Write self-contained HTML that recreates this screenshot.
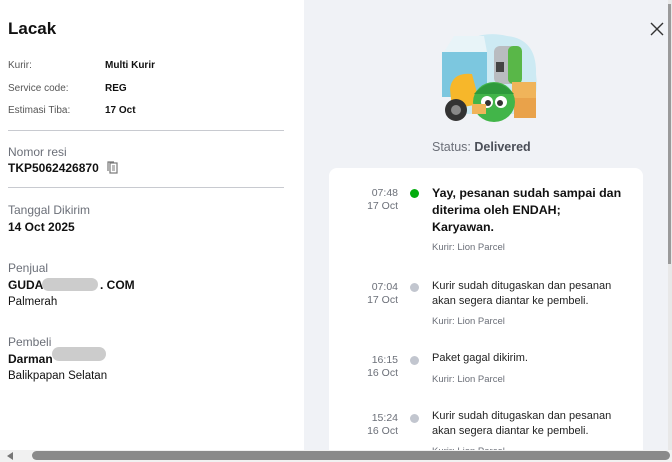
<!DOCTYPE html>
<html><head><meta charset="utf-8"><style>
*{margin:0;padding:0;box-sizing:border-box}
body{width:672px;height:462px;overflow:hidden;background:#fff;font-family:"Liberation Sans",sans-serif;color:#111;position:relative}
.abs{position:absolute;white-space:nowrap}
.lbl{font-size:10px;color:#555}
.val{font-size:10px;font-weight:bold}
.g{font-size:12px;color:#6b6f78}
.b{font-size:12px;font-weight:bold}
.n{font-size:11.5px}
hr{position:absolute;left:8px;width:276px;border:0;border-top:1px solid #c8cad0}
#right{position:absolute;left:304px;top:0;width:366px;height:450px;background:#f0f2f6}
#card{position:absolute;left:329px;top:168px;width:314px;height:282px;background:#fff;border-radius:8px 8px 0 0}
.t{font-size:10.5px;color:#6b6f78;text-align:right;width:48px;line-height:13px}
.dot{position:absolute;width:9px;height:9px;border-radius:50%;background:#c2c6cf}
.m{font-size:11px;line-height:15px;color:#222}
.k{font-size:9.5px;color:#6b6f78}
</style></head><body>
<div class="abs" style="left:8px;top:19px;font-size:17px;font-weight:bold">Lacak</div>
<div class="abs lbl" style="left:8px;top:60px">Kurir:</div><div class="abs val" style="left:105px;top:60px">Multi Kurir</div>
<div class="abs lbl" style="left:8px;top:83px">Service code:</div><div class="abs val" style="left:105px;top:83px">REG</div>
<div class="abs lbl" style="left:8px;top:105px">Estimasi Tiba:</div><div class="abs val" style="left:105px;top:105px">17 Oct</div>
<hr style="top:130px">
<div class="abs g" style="left:8px;top:145px">Nomor resi</div>
<div class="abs b" style="left:8px;top:161px">TKP5062426870</div>
<svg class="abs" style="left:107px;top:161px" width="11" height="13" viewBox="0 0 11 13"><rect x="3" y="2" width="7" height="10" fill="none" stroke="#777" stroke-width="1.2"/><path d="M1 10V1h6" fill="none" stroke="#777" stroke-width="1.2"/><path d="M5 5h3M5 7h3M5 9h3" stroke="#777"/></svg>
<hr style="top:187px">
<div class="abs g" style="left:8px;top:203px">Tanggal Dikirim</div>
<div class="abs b" style="left:8px;top:220px">14 Oct 2025</div>
<div class="abs g" style="left:8px;top:261px">Penjual</div>
<div class="abs b" style="left:8px;top:278px">GUDA&nbsp;&nbsp;&nbsp;&nbsp;&nbsp;&nbsp;&nbsp;&nbsp;&nbsp;&nbsp;&nbsp;&nbsp;&nbsp;&nbsp;&nbsp;&nbsp;&nbsp;. COM</div>
<div class="abs" style="left:42px;top:278px;width:56px;height:13px;border-radius:7px;background:#ccc"></div>
<div class="abs n" style="left:8px;top:296px">Palmerah</div>
<div class="abs g" style="left:8px;top:335px">Pembeli</div>
<div class="abs b" style="left:8px;top:352px">Darman</div>
<div class="abs" style="left:52px;top:347px;width:54px;height:14px;border-radius:7px;background:#ccc"></div>
<div class="abs n" style="left:8px;top:370px">Balikpapan Selatan</div>

<div id="right"></div>
<svg class="abs" style="left:650px;top:22px" width="14" height="14" viewBox="0 0 14 14"><path d="M1 1L13 13M13 1L1 13" stroke="#333" stroke-width="1.4"/></svg>
<svg class="abs" style="left:432px;top:24px" width="110" height="104" viewBox="0 0 110 104">
<path d="M20 60 Q5 40 25 25 Q45 5 75 12 Q105 15 104 50 Q108 80 90 90 L20 90Z" fill="#cdeaf3"/>
<rect x="10" y="28" width="45" height="45" fill="#7cc7df"/>
<path d="M12 28 L22 12 L52 12 L55 28Z" fill="#e8f4f8"/>
<rect x="62" y="22" width="22" height="38" rx="6" fill="#b9bcc0"/>
<rect x="76" y="22" width="14" height="38" rx="5" fill="#59b748"/>
<rect x="64" y="38" width="8" height="10" fill="#444"/>
<rect x="80" y="58" width="24" height="18" fill="#f0b45a"/>
<rect x="82" y="74" width="22" height="20" fill="#e9a24a"/>
<path d="M18 65 Q20 48 40 50 L48 80 L20 85Z" fill="#f7b72a"/>
<circle cx="24" cy="86" r="11" fill="#333"/><circle cx="24" cy="86" r="5" fill="#888"/>
<ellipse cx="62" cy="78" rx="21" ry="20" fill="#42b549"/>
<path d="M42 70 Q62 48 82 70Z" fill="#2e9a3c"/>
<circle cx="55" cy="78" r="6" fill="#fff"/><circle cx="69" cy="78" r="6" fill="#fff"/>
<circle cx="56" cy="79" r="3" fill="#333"/><circle cx="68" cy="79" r="3" fill="#333"/>
<rect x="40" y="80" width="14" height="10" fill="#f0b45a"/>
</svg>
<div class="abs" style="left:432px;top:140px;font-size:12.5px;color:#6b6f78">Status: <b style="color:#4a4e57">Delivered</b></div>

<div id="card"></div>
<div class="abs t" style="left:350px;top:187px">07:48<br>17 Oct</div>
<div class="dot" style="left:410px;top:189px;background:#03ac0e"></div>
<div class="abs" style="left:432px;top:185px;font-size:12.4px;font-weight:bold;line-height:17px;color:#111">Yay, pesanan sudah sampai dan<br>diterima oleh ENDAH;<br>Karyawan.</div>
<div class="abs k" style="left:432px;top:242px">Kurir: Lion Parcel</div>

<div class="abs t" style="left:350px;top:281px">07:04<br>17 Oct</div>
<div class="dot" style="left:410px;top:283px"></div>
<div class="abs m" style="left:432px;top:279px">Kurir sudah ditugaskan dan pesanan<br>akan segera diantar ke pembeli.</div>
<div class="abs k" style="left:432px;top:316px">Kurir: Lion Parcel</div>

<div class="abs t" style="left:350px;top:354px">16:15<br>16 Oct</div>
<div class="dot" style="left:410px;top:356px"></div>
<div class="abs m" style="left:432px;top:351px">Paket gagal dikirim.</div>
<div class="abs k" style="left:432px;top:374px">Kurir: Lion Parcel</div>

<div class="abs t" style="left:350px;top:412px">15:24<br>16 Oct</div>
<div class="dot" style="left:410px;top:414px"></div>
<div class="abs m" style="left:432px;top:409px">Kurir sudah ditugaskan dan pesanan<br>akan segera diantar ke pembeli.</div>
<div class="abs k" style="left:432px;top:446px">Kurir: Lion Parcel</div>

<div class="abs" style="left:668px;top:0;width:4px;height:450px;background:#e8e8e8"></div>
<div class="abs" style="left:668px;top:4px;width:3px;height:260px;background:#9a9a9a"></div>
<div class="abs" style="left:0;top:450px;width:672px;height:12px;background:#f1f1f1"></div>
<svg class="abs" style="left:6px;top:452px" width="8" height="8"><path d="M7 0L1 4L7 8Z" fill="#777"/></svg>
<div class="abs" style="left:32px;top:451px;width:638px;height:9px;border-radius:5px;background:#8a8a8a"></div>
</body></html>
